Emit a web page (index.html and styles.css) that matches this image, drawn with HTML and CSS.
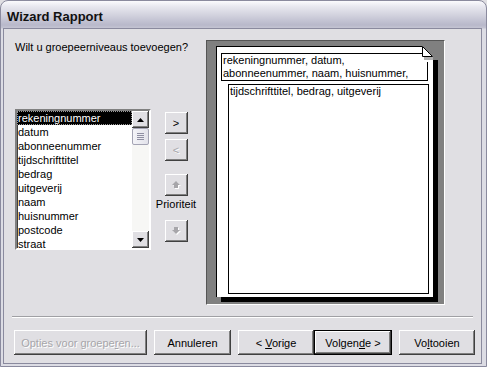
FILE: index.html
```html
<!DOCTYPE html>
<html lang="nl">
<head>
    <meta charset="UTF-8">
    <title>Wizard Rapport</title>
    <link rel="stylesheet" href="styles.css">
</head>
<body>
    <div class="window">
        <div class="titlebar">Wizard Rapport</div>
        <div class="dialog">
            <div class="main">
                <div class="left">
                    <p class="prompt">Wilt u groepeerniveaus toevoegen?</p>
                    <div class="picker">
                        <div class="listbox">
                            <ul class="items">
                                <li class="selected">rekeningnummer</li>
                                <li>datum</li>
                                <li>abonneenummer</li>
                                <li>tijdschrifttitel</li>
                                <li>bedrag</li>
                                <li>uitgeverij</li>
                                <li>naam</li>
                                <li>huisnummer</li>
                                <li>postcode</li>
                                <li>straat</li>
                            </ul>
                            <div class="scrollbar">
                                <div class="sb-btn">
                                    <svg width="7" height="4" viewBox="0 0 7 4"><polygon points="3.5,0 7,4 0,4" fill="#000"/></svg>
                                </div>
                                <div class="sb-track">
                                    <div class="sb-thumb">
                                        <span></span><span></span><span></span><span></span>
                                    </div>
                                </div>
                                <div class="sb-btn">
                                    <svg width="7" height="4" viewBox="0 0 7 4"><polygon points="0,0 7,0 3.5,4" fill="#000"/></svg>
                                </div>
                            </div>
                        </div>
                        <div class="moves">
                            <button class="btn small">&gt;</button>
                            <button class="btn small gap-s" disabled>&lt;</button>
                            <button class="btn small gap-l" disabled>
                                <svg width="9" height="8" viewBox="0 0 9 8">
                                    <polygon points="5,1 9,5 7,5 7,8 3,8 3,5 1,5" fill="#fff"/>
                                    <polygon points="4,0 8,4 6,4 6,7 2,7 2,4 0,4" fill="#a7a6aa"/>
                                </svg>
                            </button>
                            <span class="priority">Prioriteit</span>
                            <button class="btn small gap-m" disabled>
                                <svg width="9" height="8" viewBox="0 0 9 8">
                                    <polygon points="3,1 7,1 7,4 9,4 5,8 1,4 3,4" fill="#fff"/>
                                    <polygon points="2,0 6,0 6,3 8,3 4,7 0,3 2,3" fill="#a7a6aa"/>
                                </svg>
                            </button>
                        </div>
                    </div>
                </div>
                <div class="preview">
                    <div class="page">
                        <div class="group-head">rekeningnummer, datum,<br>abonneenummer, naam, huisnummer,</div>
                        <div class="detail">tijdschrifttitel, bedrag, uitgeverij</div>
                        <svg class="fold" width="16" height="16" viewBox="0 0 16 16">
                            <rect width="16" height="16" fill="#808080"/>
                            <polygon points="0,0 11,11 11,16 0,16" fill="#fff"/>
                            <rect x="11" y="14" width="5" height="2" fill="#000"/>
                            <rect x="2" y="11" width="9" height="3" fill="#b0b0b0"/>
                            <polygon points="0.5,0.5 10.5,10.5 0.5,10.5" fill="#fff" stroke="#000" stroke-width="1"/>
                        </svg>
                    </div>
                </div>
            </div>
            <div class="separator"></div>
            <div class="actions">
                <button class="btn options" disabled>Opties voor groepe<u>r</u>en...</button>
                <button class="btn cancel">Annuleren</button>
                <button class="btn back">&lt; <u>V</u>orige</button>
                <button class="btn next">Volgen<u>d</u>e &gt;</button>
                <button class="btn finish">Vo<u>l</u>tooien</button>
            </div>
        </div>
    </div>
</body>
</html>
```

FILE: styles.css
```css
/* Reset */
* {
    margin: 0;
    padding: 0;
    box-sizing: border-box;
}

body {
    font-family: "Liberation Sans", Arial, sans-serif;
    font-size: 11px;
    color: #000;
    background-color: #e0dfe3;
}

/* Window frame */
.window {
    width: 487px;
    height: 367px;
    border: 1px solid #8a8a9e;
    border-radius: 8px 8px 0 0;
    background: linear-gradient(#fbfbfd 0, #e6e6ee 6px, #d2d2de 14px, #b8b8ca 24px, #c4c4d2 27px, #dcdce4 28px);
    overflow: hidden;
}

.titlebar {
    height: 27px;
    padding: 4px 0 0 6px;
    line-height: 23px;
    font-size: 13px;
    font-weight: bold;
    color: #111;
}

.dialog {
    height: 336px;
    margin: 0 4px 0 2px;
    border: 1px solid #8a8a9e;
    background-color: #e0dfe3;
}

/* Main area */
.main {
    display: flex;
    height: 276px;
    padding: 11px 0 0 11px;
}

.left {
    width: 191px;
}

.prompt {
    line-height: 14px;
}

.picker {
    display: flex;
    margin-top: 55px;
}

/* List box */
.listbox {
    display: flex;
    width: 136px;
    height: 141px;
    border: 2px solid;
    border-color: #808080 #fff #fff #808080;
    box-shadow: inset 1px 1px 0 #404040;
    background-color: #fff;
    overflow: hidden;
}

.items {
    list-style: none;
    width: 115px;
}

.items li {
    height: 14px;
    line-height: 14px;
    padding-left: 1px;
    white-space: nowrap;
}

.items li.selected {
    background-color: #000;
    color: #fff;
    outline: 1px dotted #9a9a9a;
    outline-offset: -1px;
}

.scrollbar {
    display: flex;
    flex-direction: column;
    width: 17px;
}

.sb-btn {
    display: flex;
    align-items: center;
    justify-content: center;
    height: 17px;
    background-color: #e0dfe3;
    box-shadow: inset -1px -1px 0 #404040, inset 1px 1px 0 #fff, inset -2px -2px 0 #808080;
}

.sb-track {
    flex: 1;
    background-color: #f7f7f5;
}

.sb-thumb {
    display: flex;
    flex-direction: column;
    align-items: center;
    justify-content: center;
    gap: 1px;
    height: 17px;
    border: 1px solid #a4a4b4;
    border-radius: 2px;
    background: linear-gradient(90deg, #f4f4f8, #e2e2ea);
}

.sb-thumb span {
    display: block;
    width: 7px;
    height: 1px;
    background-color: #8e8ea2;
}

/* Move buttons */
.moves {
    display: flex;
    flex-direction: column;
    align-items: center;
    width: 40px;
    margin-left: 5px;
    padding-top: 3px;
}

.btn {
    font-family: "Liberation Sans", Arial, sans-serif;
    font-size: 11px;
    color: #000;
    border: none;
    background-color: #e0dfe3;
    box-shadow: inset -1px -1px 0 #404040, inset 1px 1px 0 #fff, inset -2px -2px 0 #808080;
}

.btn:disabled {
    color: #a7a6aa;
    text-shadow: 1px 1px 0 #fff;
}

.btn.small {
    display: flex;
    align-items: center;
    justify-content: center;
    width: 23px;
    height: 22px;
    padding-bottom: 1px;
}

.gap-s {
    margin-top: 5px;
}

.gap-l {
    margin-top: 13px;
}

.gap-m {
    margin-top: 9px;
}

.priority {
    line-height: 14px;
    margin-top: 1px;
}

/* Report preview */
.preview {
    width: 239px;
    height: 265px;
    border: 1px solid;
    border-color: #555 #fff #fff #555;
    background-color: #808080;
    padding: 5px 0 0 9px;
}

.page {
    position: relative;
    width: 217px;
    height: 251px;
    border-top: 1px solid #000;
    border-left: 1px solid #000;
    background-color: #fff;
    box-shadow: 5px 5px 0 #000;
    padding-top: 6px;
}

.group-head {
    width: 207px;
    height: 28px;
    margin-left: 4px;
    padding-left: 1px;
    border: 1px solid #000;
    line-height: 13px;
    white-space: nowrap;
    overflow: hidden;
}

.detail {
    width: 201px;
    height: 210px;
    margin: 3px 0 0 11px;
    padding-left: 1px;
    border: 1px solid #000;
    line-height: 13px;
}

.fold {
    position: absolute;
    top: -1px;
    right: -5px;
}

/* Bottom buttons */
.separator {
    width: 461px;
    height: 2px;
    margin: 11px 0 0 8px;
    border-top: 1px solid #a0a0a4;
    border-bottom: 1px solid #fff;
}

.actions {
    display: flex;
    margin: 12px 0 0 10px;
}

.actions .btn {
    height: 25px;
}

.options {
    width: 133px;
}

.cancel {
    width: 77px;
    margin-left: 7px;
}

.back {
    width: 76px;
    margin-left: 7px;
}

.next {
    width: 78px;
    border: 1px solid #000;
}

.finish {
    width: 76px;
    margin-left: 7px;
}
```
